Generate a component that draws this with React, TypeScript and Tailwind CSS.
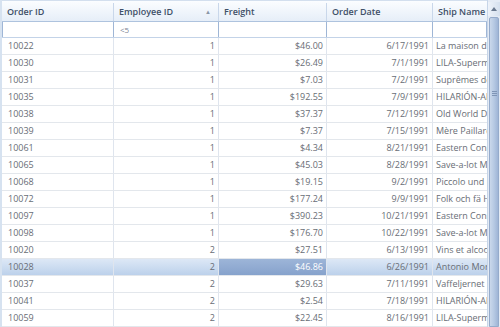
import React from "react";

const rows = [
  ["10022", "1", "$46.00", "6/17/1991", "La maison d'Asie"],
  ["10030", "1", "$26.49", "7/1/1991", "LILA-Supermercado"],
  ["10031", "1", "$7.03", "7/2/1991", "Suprêmes délices"],
  ["10035", "1", "$192.55", "7/9/1991", "HILARIÓN-Abastos"],
  ["10038", "1", "$37.37", "7/12/1991", "Old World Delicatessen"],
  ["10039", "1", "$7.37", "7/15/1991", "Mère Paillarde"],
  ["10061", "1", "$4.34", "8/21/1991", "Eastern Connection"],
  ["10065", "1", "$45.03", "8/28/1991", "Save-a-lot Markets"],
  ["10068", "1", "$19.15", "9/2/1991", "Piccolo und mehr"],
  ["10072", "1", "$177.24", "9/9/1991", "Folk och fä HB"],
  ["10097", "1", "$390.23", "10/21/1991", "Eastern Connection"],
  ["10098", "1", "$176.70", "10/22/1991", "Save-a-lot Markets"],
  ["10020", "2", "$27.51", "6/13/1991", "Vins et alcools Chevalier"],
  ["10028", "2", "$46.86", "6/26/1991", "Antonio Moreno Taquería"],
  ["10037", "2", "$29.63", "7/11/1991", "Vaffeljernet"],
  ["10041", "2", "$2.54", "7/18/1991", "HILARIÓN-Abastos"],
  ["10059", "2", "$22.45", "8/16/1991", "LILA-Supermercado"],
];

const cols = "grid grid-cols-[112px_105px_108px_106px_1fr]";

export default function App() {
  return (
    <div
      className="w-[500px] h-[327px] overflow-hidden flex bg-white text-[9px] text-[#686d75]"
      style={{ fontFamily: '"Open Sans", "Liberation Sans", sans-serif' }}
    >
      <div className="flex-1 min-w-0 flex flex-col border-l-2 border-[#d6e2f0]">
        {/* header */}
        <div className={`${cols} h-[23px] pt-[2px] border-t border-[#d3dfee] border-b border-b-[#aec3de] bg-gradient-to-b from-[#fbfdff] to-[#e6eef8] text-[#3f5068] font-semibold`}>
          <div className="flex items-center px-[5px] border-r border-[#c9d7ea]">Order ID</div>
          <div className="flex items-center justify-between px-[5px] border-r border-[#c9d7ea]">
            <span>Employee ID</span>
            <span className="text-[6px] text-[#8a96a6] pr-[2px]">▲</span>
          </div>
          <div className="flex items-center px-[5px] border-r border-[#c9d7ea]">Freight</div>
          <div className="flex items-center px-[5px] border-r border-[#c9d7ea]">Order Date</div>
          <div className="flex items-center px-[5px] whitespace-nowrap overflow-hidden">Ship Name</div>
        </div>
        {/* filter row */}
        <div className={`${cols} h-[16px] bg-white border-b border-[#c3d3e8]`}>
          <div className="border-x border-[#9fb6d6]" />
          <div className="border-r border-[#9fb6d6] flex items-center px-[6px] text-[8px] text-[#7c8594]">&lt;5</div>
          <div className="border-r border-[#9fb6d6]" />
          <div className="border-r border-[#9fb6d6]" />
          <div className="border-r border-[#9fb6d6]" />
        </div>
        {/* rows */}
        {rows.map((r) => {
          const sel = r[0] === "10028";
          return (
            <div
              key={r[0]}
              className={`${cols} h-[17px] shrink-0 border-b border-[#e3e7ec] ${
                sel ? "bg-gradient-to-b from-[#dde8f6] to-[#bcd1eb]" : ""
              }`}
            >
              <div className="flex items-center px-[6px] border-r border-[#dfe5ee]">{r[0]}</div>
              <div className="flex items-center justify-end px-[3px] border-r border-[#dfe5ee]">{r[1]}</div>
              <div
                className={`flex items-center justify-end px-[3px] border-r border-[#dfe5ee] ${
                  sel ? "bg-gradient-to-b from-[#9db5d8] to-[#86a2cc] text-white" : ""
                }`}
              >
                {r[2]}
              </div>
              <div className="flex items-center justify-end px-[3px] border-r border-[#dfe5ee]">{r[3]}</div>
              <div className="flex items-center px-[3px] whitespace-nowrap overflow-hidden">{r[4]}</div>
            </div>
          );
        })}
      </div>
      {/* scrollbar */}
      <div className="w-[13px] shrink-0 flex flex-col bg-[#e4ebf5] border-l border-[#c7d5e8]">
        <div className="h-[14px] mt-[2px] flex items-center justify-center bg-gradient-to-r from-[#eef3fa] to-[#d5e0ee]">
          <svg width="6" height="4" viewBox="0 0 6 4">
            <path d="M0 4 L3 0 L6 4 Z" fill="#6a7a90" />
          </svg>
        </div>
        <div className="flex-1 mt-[1px] mx-[1px] rounded-t-[2px] bg-gradient-to-r from-[#cad8eb] via-[#b6c9e3] to-[#9fb5d6] border border-[#95abcb] flex flex-col items-center pt-[73px]">
          <div className="w-[5px] h-[1px] bg-[#7f95b6]" />
          <div className="w-[5px] h-[1px] bg-[#7f95b6] mt-[1px]" />
          <div className="w-[5px] h-[1px] bg-[#7f95b6] mt-[1px]" />
        </div>
      </div>
    </div>
  );
}
